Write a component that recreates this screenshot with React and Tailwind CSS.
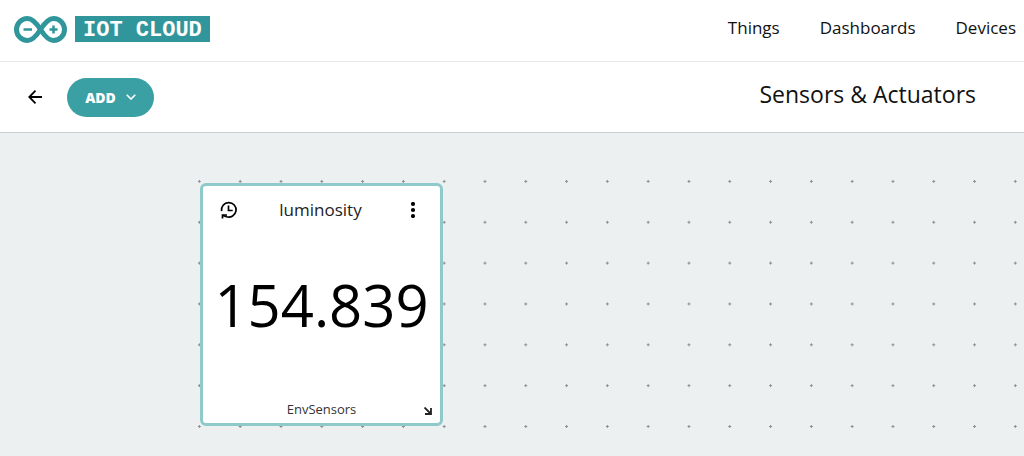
const NAV_ITEMS = ["Things", "Dashboards", "Devices"];

function Logo() {
  return (
    <a href="#home" className="flex items-center gap-2">
      <svg width="53" height="27" viewBox="0 0 53 27" fill="none" stroke="#31969b" aria-hidden="true">
        <path
          d="M26.5 13.5C23 8 19 2.5 13.5 2.5a11 11 0 0 0 0 22C19 24.5 23 19 26.5 13.5S34 2.5 39.5 2.5a11 11 0 0 1 0 22C34 24.5 30 19 26.5 13.5Z"
          strokeWidth="5"
        />
        <path d="M9.5 13.5h8.5M35.5 13.5h8M39.5 9.5v8" strokeWidth="2.5" />
      </svg>
      <span className="h-[26px] bg-[#31969b] px-2 font-['Liberation_Mono',monospace] text-[22px] leading-[30px] font-bold text-white">
        IOT CLOUD
      </span>
    </a>
  );
}

function HistoryIcon() {
  return (
    <svg width="18" height="18" viewBox="0 0 18 18" fill="none" stroke="black" strokeWidth="1.7">
      <path d="M1.6 10.2A7.3 7.3 0 1 1 6.5 15.8L3 14.5" />
      <path d="M8.5 4.5v5H12.7" />
      <path d="M2.5 17.5V14H7" />
    </svg>
  );
}

function Widget({ name, value, source }) {
  return (
    <article className="flex h-[243px] w-[243px] flex-col rounded-md border-3 border-[#8fc9ca] bg-white">
      <header className="flex h-12 items-center justify-between px-[17px]">
        <button type="button" aria-label="History">
          <HistoryIcon />
        </button>
        <h2 className="text-[17px] leading-6 text-[#222]">{name}</h2>
        <button type="button" aria-label="Widget options" className="flex w-5 justify-center">
          <svg width="6" height="16" viewBox="0 0 6 16">
            <circle cx="3" cy="2" r="2.1" />
            <circle cx="3" cy="8" r="2.1" />
            <circle cx="3" cy="14" r="2.1" />
          </svg>
        </button>
      </header>

      <div className="flex flex-1 items-center justify-center pb-5 text-[58px] leading-none text-black">
        {value}
      </div>

      <footer className="grid h-7 grid-cols-[1fr_auto_1fr] items-center px-2">
        <span className="col-start-2 text-[13px] leading-5 text-[#333]">{source}</span>
        <svg
          className="mt-1 justify-self-end"
          width="8"
          height="8"
          viewBox="0 0 8 8"
          fill="none"
          stroke="#222"
          strokeWidth="1.8"
        >
          <path d="M.5.5L7 7M7 1v6H1" />
        </svg>
      </footer>
    </article>
  );
}

export default function App() {
  return (
    <div className="flex min-h-screen flex-col overflow-hidden bg-[#ecf0f1] font-['Open_Sans',sans-serif] text-[#111]">
      <header className="flex h-[62px] items-center justify-between border-b border-[#e8e8e8] bg-white pr-2 pb-[3px] pl-[14px]">
        <Logo />
        <nav className="flex gap-10 pb-[3px] text-[17px] leading-6">
          {NAV_ITEMS.map((item) => (
            <a key={item} href={`#${item.toLowerCase()}`}>
              {item}
            </a>
          ))}
        </nav>
      </header>

      <div className="flex h-[71px] items-center justify-between border-b border-[#c6d0d0] bg-white pr-12 pl-7">
        <div className="flex items-center gap-6">
          <button type="button" aria-label="Back">
            <svg width="15" height="14" viewBox="0 0 15 14" fill="none" stroke="black" strokeWidth="1.8">
              <path d="M7.5.7L1.3 7l6.2 6.3M1.3 7H14" />
            </svg>
          </button>
          <button
            type="button"
            className="flex h-[39px] w-[87px] items-center justify-center gap-[10px] rounded-full bg-[#3aa0a4] text-[14px] font-extrabold text-white"
          >
            ADD
            <svg width="10" height="6" viewBox="0 0 10 6" fill="none" stroke="white" strokeWidth="1.6">
              <path d="M.7.7L5 5 9.3.7" />
            </svg>
          </button>
        </div>
        <h1 className="pb-[6px] text-[23px] leading-8">Sensors &amp; Actuators</h1>
      </div>

      {/* dot grid, one dot in the middle of each cell */}
      <main className="mt-7 -mr-3 ml-[179px] h-[286px] bg-[radial-gradient(circle,#879090_1px,transparent_1px)] bg-[length:41px_41px] bg-repeat-round pt-[22px] pl-[21px]">
        <Widget name="luminosity" value="154.839" source="EnvSensors" />
      </main>
    </div>
  );
}
